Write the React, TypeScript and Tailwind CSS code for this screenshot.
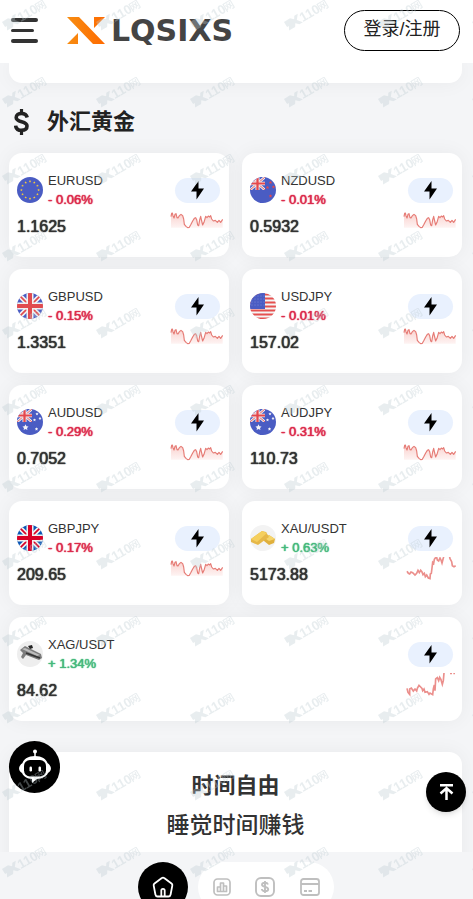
import React from "react";

type FlagKind = "eu" | "nz" | "gb" | "us" | "au" | "gbBright" | "gold" | "silver";
type ChartKind = "wave" | "gold" | "silver";

interface Quote {
  pair: string;
  change: string;
  price: string;
  up?: boolean;
  flag: FlagKind;
  chart: ChartKind;
}

const quotes: Quote[] = [
  { pair: "EURUSD", change: "- 0.06%", price: "1.1625", flag: "eu", chart: "wave" },
  { pair: "NZDUSD", change: "- 0.01%", price: "0.5932", flag: "nz", chart: "wave" },
  { pair: "GBPUSD", change: "- 0.15%", price: "1.3351", flag: "gb", chart: "wave" },
  { pair: "USDJPY", change: "- 0.01%", price: "157.02", flag: "us", chart: "wave" },
  { pair: "AUDUSD", change: "- 0.29%", price: "0.7052", flag: "au", chart: "wave" },
  { pair: "AUDJPY", change: "- 0.31%", price: "110.73", flag: "au", chart: "wave" },
  { pair: "GBPJPY", change: "- 0.17%", price: "209.65", flag: "gbBright", chart: "wave" },
  { pair: "XAU/USDT", change: "+ 0.63%", price: "5173.88", up: true, flag: "gold", chart: "gold" },
  { pair: "XAG/USDT", change: "+ 1.34%", price: "84.62", up: true, flag: "silver", chart: "silver" },
];

const wave =
  "513,215 515,205 517,204 519,212 522,219 525,208 528,206 531,218 534,219 538,212 543,208 548,212 551,222 553,238 558,244 563,248 568,247 573,238 578,228 583,220 587,218 590,224 593,240 596,242 599,225 602,214 605,228 608,240 612,232 617,214 621,218 625,213 629,216 632,212 635,222 640,228 646,226 652,232 657,226 662,232 668,223";

function Sparkline({ kind, id }: { kind: ChartKind; id: string }) {
  if (kind === "wave") {
    return (
      <svg className="h-6 w-[54px]" viewBox="510 192 162 72" aria-hidden="true">
        <defs>
          <linearGradient id={id} x1="0" y1="0" x2="0" y2="1">
            <stop offset="0" stopColor="#f28b82" stopOpacity="0.4" />
            <stop offset="1" stopColor="#f28b82" stopOpacity="0.1" />
          </linearGradient>
        </defs>
        <polygon points={`513,248 ${wave} 668,248`} fill={`url(#${id})`} />
        <polyline points={wave} fill="none" stroke="#e67c76" strokeWidth="3.5" strokeLinejoin="round" />
      </svg>
    );
  }
  if (kind === "gold") {
    return (
      <svg className="h-6 w-[54px]" viewBox="504 189 162 72" aria-hidden="true">
        <polyline
          points="516,232 520,238 524,240 528,234 533,236 540,243 545,238 549,229 553,236 557,229 561,234 564,242 568,238 571,248 575,243 580,252 585,254 586,240 589,238 591,222 593,205 596,208 598,196 601,192 605,190 607,198 611,201 615,192 618,198 621,207 625,192 630,170 640,170 645,194 650,203 652,215 657,218 662,215"
          fill="none"
          stroke="#eb8f8c"
          strokeWidth="5"
        />
      </svg>
    );
  }
  return (
    <svg className="h-6 w-[54px]" viewBox="1209 192 162 72" aria-hidden="true">
      <polyline
        points="1221,238 1224,250 1229,256 1229,240 1234,237 1240,246 1245,240 1250,246 1252,238 1257,229 1262,234 1266,238 1268,245 1272,240 1275,250 1282,248 1287,256 1290,252 1298,257 1300,240 1303,228 1305,245 1307,210 1312,206 1316,215 1319,205 1323,212 1327,226 1330,215 1332,192 1336,170"
        fill="none"
        stroke="#eb8f8c"
        strokeWidth="5"
      />
      <path d="M1350 194h6m4 0h5" stroke="#eb8f8c" strokeWidth="4" />
    </svg>
  );
}

function UnionJack({ blue, red, cross = "#f1f1f1" }: { blue: string; red: string; cross?: string }) {
  return (
    <g>
      <rect width="26" height="26" fill={blue} />
      <path d="M0 0L26 26M26 0L0 26" stroke={cross} strokeWidth="5" />
      <path d="M0 0L26 26M26 0L0 26" stroke={red} strokeWidth="1.6" />
      <path d="M13 0V26M0 13H26" stroke={cross} strokeWidth="7" />
      <path d="M13 0V26M0 13H26" stroke={red} strokeWidth="4" />
    </g>
  );
}

function Star({ x, y, r, fill }: { x: number; y: number; r: number; fill: string }) {
  const points = Array.from({ length: 10 }, (_, i) => {
    const a = (Math.PI / 5) * i - Math.PI / 2;
    const d = i % 2 ? r * 0.5 : r;
    return `${x + d * Math.cos(a)},${y + d * Math.sin(a)}`;
  }).join(" ");
  return <polygon points={points} fill={fill} />;
}

function Flag({ kind, id }: { kind: FlagKind; id: string }) {
  return (
    <svg className="size-[26px] shrink-0" viewBox="0 0 26 26" aria-hidden="true">
      <defs>
        <clipPath id={id}>
          <circle cx="13" cy="13" r="13" />
        </clipPath>
      </defs>
      <g clipPath={`url(#${id})`}>
        {kind === "eu" && (
          <>
            <rect width="26" height="26" fill="#4a5cc3" />
            {Array.from({ length: 12 }, (_, i) => {
              const a = (Math.PI / 6) * i;
              return <Star key={i} x={13 + 8.6 * Math.cos(a)} y={13 + 8.6 * Math.sin(a)} r={1.3} fill="#f3c73c" />;
            })}
          </>
        )}
        {(kind === "nz" || kind === "au") && (
          <>
            <rect width="26" height="26" fill="#4a5cc3" />
            <svg x="0" y="0" width="15" height="13" viewBox="0 0 26 26" preserveAspectRatio="none">
              <UnionJack blue="#4a5cc3" red="#e5484d" />
            </svg>
            {kind === "nz" ? (
              <>
                <Star x={20.5} y={5.5} r={1.7} fill="#e5484d" />
                <Star x={17.5} y={10.5} r={1.7} fill="#e5484d" />
                <Star x={23.5} y={10} r={1.7} fill="#e5484d" />
                <Star x={20.5} y={19} r={1.8} fill="#e5484d" />
              </>
            ) : (
              <>
                <Star x={8.5} y={18.5} r={3.2} fill="#f4f4f8" />
                <Star x={20} y={5} r={1.6} fill="#f4f4f8" />
                <Star x={17.5} y={11} r={1.6} fill="#f4f4f8" />
                <Star x={23} y={9.5} r={1.6} fill="#f4f4f8" />
                <Star x={19.5} y={20} r={1.8} fill="#f4f4f8" />
              </>
            )}
          </>
        )}
        {kind === "gb" && <UnionJack blue="#4a5cc3" red="#e14b4f" />}
        {kind === "gbBright" && <UnionJack blue="#0b57b5" red="#d80027" />}
        {kind === "us" && (
          <>
            <rect width="26" height="26" fill="#f4f4f4" />
            {[1, 5, 9, 13, 17, 21, 25].map((y) => (
              <rect key={y} y={y - 0.5} width="26" height="2" fill="#e5504f" />
            ))}
            <rect width="15" height="16" fill="#4a5cc3" />
            {[3, 6, 9, 12].map((y) =>
              [2, 5, 8, 11, 14].map((x) => <circle key={`${x}-${y}`} cx={x} cy={y} r="0.4" fill="#b9c1ee" />)
            )}
          </>
        )}
        {kind === "gold" && (
          <>
            <rect width="26" height="26" fill="#f3f3f3" />
            <path d="M13 12l6-2 6 4-1 4-5 2-5-4z" fill="#e0b03c" />
            <path d="M13 12l6-2 6 4-6 2z" fill="#f6d56b" />
            <path d="M1 14l11-8 4 1 3 5-11 8-7-3z" fill="#e6b848" />
            <path d="M1 14l11-8 5 2-10 9z" fill="#f5cf5d" />
          </>
        )}
        {kind === "silver" && (
          <>
            <rect width="26" height="26" fill="#eeeeee" />
            <path d="M3 9l5-4 16 8 1 4-3 2-13-5-3 4-2-2 2-4z" fill="#7c7c7c" />
            <path d="M5 8l3-1 15 7-3 1z" fill="#bdbdbd" />
            <path d="M11 5l4-1 1 3-3 1z" fill="#222222" />
            <path d="M9 12l14 5" stroke="#333333" strokeWidth="1.5" />
          </>
        )}
      </g>
    </svg>
  );
}

function QuoteCard({ quote, id }: { quote: Quote; id: string }) {
  return (
    <article className="flex h-26 justify-between rounded-[13px] bg-white pr-[5px] pl-2 shadow-[0_0_20px_rgba(0,0,0,0.05)] last:col-span-2">
      <div className="pt-[18px]">
        <div className="flex items-center gap-[5px]">
          <Flag kind={quote.flag} id={`${id}-flag`} />
          <div className="text-[13px] leading-[19px]">
            <h3 className="text-[#333]">{quote.pair}</h3>
            <p
              className={
                quote.up
                  ? "text-[#45b97c] [text-shadow:0_0_1px_currentColor,0_0_1px_currentColor]"
                  : "text-[#dc2a4c] [text-shadow:0_0_1px_currentColor,0_0_1px_currentColor]"
              }
            >
              {quote.change}
            </p>
          </div>
        </div>
        <p className="mt-[7px] text-base leading-[22px] text-[#333] [text-shadow:0_0_1px_currentColor,0_0_1px_currentColor]">
          {quote.price}
        </p>
      </div>
      <div className="flex flex-col items-end gap-[6px] pt-[25px]">
        <button
          type="button"
          aria-label={`${quote.pair} 交易`}
          className="mr-1 flex h-[25px] w-[45px] items-center justify-center rounded-full bg-[#e9f1fe]"
        >
          <svg className="h-5 w-4" viewBox="0 0 16 20" aria-hidden="true">
            <path d="M8.500 0L1 10.500H6.500V18.500L14 7.500H8.500Z" fill="#000" />
          </svg>
        </button>
        <Sparkline kind={quote.chart} id={`${id}-fill`} />
      </div>
    </article>
  );
}

function Watermark() {
  return (
    <svg className="pointer-events-none absolute inset-0 z-30 size-full" aria-hidden="true">
      <defs>
        <pattern id="watermark" width="94" height="77" patternUnits="userSpaceOnUse">
          <g transform="translate(8 30) rotate(-31)" fill="#bccbd1" fillOpacity="0.35">
            <path d="M-1 -10H6L9 -7L11 -10H15L11 -5L15 0H11L8 -3L6 0H-1L1 -4H-1Z" />
            <text x="15" y="0" fontSize="13" fontWeight="700" fontFamily="Liberation Sans, Noto Sans CJK SC, sans-serif">
              110
            </text>
            <text x="35" y="0" fontSize="11" fontWeight="500" fontFamily="Noto Sans CJK SC, sans-serif">
              网
            </text>
          </g>
        </pattern>
      </defs>
      <rect width="100%" height="100%" fill="url(#watermark)" />
    </svg>
  );
}

export default function App() {
  return (
    <div className="relative flex h-screen flex-col overflow-hidden bg-[#f4f5f7] font-['Liberation_Sans','Noto_Sans_CJK_SC',sans-serif] text-[#333]">
      <header className="flex h-[63px] shrink-0 items-start bg-white pr-[13px] pl-[11px]">
        <button type="button" aria-label="菜单" className="mt-[18px] flex flex-col gap-[7px]">
          <span className="h-1 w-[27px] rounded-full bg-[#333]" />
          <span className="h-[3px] w-[23px] rounded-full bg-[#333]" />
          <span className="h-1 w-[27px] rounded-full bg-[#333]" />
        </button>
        <a href="#home" className="mt-[13px] ml-[29px] flex items-center gap-[6px]">
          <svg className="h-[27px] w-[38px]" viewBox="0 0 38 27" aria-hidden="true">
            <defs>
              <linearGradient id="brand" x1="0" x2="1">
                <stop offset="0" stopColor="#f78d12" />
                <stop offset="1" stopColor="#ff6a00" />
              </linearGradient>
            </defs>
            <path d="M0 0H12L38 27H26ZM27 0H38L27 11ZM0 27H11V16Z" fill="url(#brand)" />
          </svg>
          <span className="font-['DejaVu_Sans',sans-serif] text-[30px] leading-[35px] font-bold text-[#444]">LQSIXS</span>
        </a>
        <button
          type="button"
          className="mt-[10px] ml-auto h-[41px] w-[116px] rounded-full border border-black pb-1 text-lg leading-6 text-[#222]"
        >
          登录/注册
        </button>
      </header>

      <main className="min-h-0 flex-1 overflow-hidden pr-[11px] pl-[9px]">
        <div className="h-5 rounded-b-[13px] bg-white shadow-[0_0_20px_rgba(0,0,0,0.05)]" />
        <div className="flex h-[70px] items-center gap-[18px] pt-[7px] pl-[5px]">
          <svg className="h-[26px] w-[15px]" viewBox="0 0 15 26" fill="none" stroke="#222" aria-hidden="true">
            <path d="M7.500 0V5M7.500 21V26" strokeWidth="3.200" />
            <path d="M13.200 8.500C12.500 5.500 10.500 4.500 7.500 4.500C4.500 4.500 2.200 6 2.200 8.500C2.200 14 13 11.500 13 17C13 19.800 10.800 21.300 7.500 21.300C4 21.300 2 19.800 1.600 16.600" strokeWidth="3.600" />
          </svg>
          <h2 className="text-[22px] leading-8 font-bold text-[#222]">外汇黄金</h2>
        </div>

        <section className="grid grid-cols-2 gap-x-[13px] gap-y-3">
          {quotes.map((quote, i) => (
            <QuoteCard key={quote.pair} quote={quote} id={`quote-${i}`} />
          ))}
        </section>

        <section className="mt-[31px] h-[140px] rounded-[13px] bg-white pt-[15px] text-center shadow-[0_0_20px_rgba(0,0,0,0.05)]">
          <h2 className="text-[22px] leading-[38px] font-bold">时间自由</h2>
          <p className="text-[23px] leading-10 font-medium">睡觉时间赚钱</p>
        </section>
      </main>

      <nav className="z-10 flex h-[47px] shrink-0 justify-center gap-[10px] overflow-hidden bg-[#f4f5f7] pt-[10px] pr-[2px]">
        <a href="#home" aria-label="首页" className="flex size-[50px] items-center justify-center rounded-full bg-black">
          <svg className="size-[22px]" viewBox="0 0 22 22" fill="none" stroke="#fff" strokeWidth="1.800" strokeLinejoin="round" aria-hidden="true">
            <path d="M9.500 2.200Q11 1.200 12.500 2.200L19.500 7.500Q20.600 8.300 20.300 9.600L18.600 18.500Q18.200 20.500 16.500 20.500H5.500Q3.800 20.500 3.400 18.500L1.700 9.600Q1.400 8.300 2.500 7.500Z" />
            <path d="M9.300 20V14.500Q9.300 12.800 11 12.800Q12.700 12.800 12.700 14.500V20" />
          </svg>
        </a>
        <div className="flex h-[50px] w-[136px] items-center justify-between rounded-full bg-white pr-[14px] pl-[15px] text-[#bfbfbf]">
          <a href="#market" aria-label="行情">
            <svg className="size-[18px]" viewBox="0 0 18 18" fill="none" stroke="currentColor" strokeWidth="1.700" strokeLinejoin="round" aria-hidden="true">
              <rect x="1" y="1" width="16" height="16" rx="3.500" />
              <path d="M4.500 13.500V9H7.500V5H10.500V13.500ZM7.500 9V13.500M10.500 8H13.500V13.500H4.500" />
            </svg>
          </a>
          <a href="#trade" aria-label="交易">
            <svg className="size-5" viewBox="0 0 20 20" fill="none" stroke="currentColor" strokeWidth="1.900" aria-hidden="true">
              <rect x="1" y="1" width="18" height="18" rx="5" />
              <path d="M13 7.500C12.500 6 11.500 5.700 10 5.700C8.200 5.700 7 6.500 7 7.800C7 10.600 13.200 9.200 13.200 12.200C13.200 13.600 12 14.300 10 14.300C8.200 14.300 7 13.600 6.800 12M10 4V16" />
            </svg>
          </a>
          <a href="#assets" aria-label="资产">
            <svg className="h-[18px] w-5" viewBox="0 0 20 18" fill="none" stroke="currentColor" strokeWidth="1.800" aria-hidden="true">
              <rect x="1" y="1" width="18" height="16" rx="2.500" />
              <path d="M1 6H19M4 13H7M8.500 13H12" />
            </svg>
          </a>
        </div>
      </nav>

      <button
        type="button"
        aria-label="客服"
        className="absolute bottom-[106px] left-[9px] z-20 flex h-[52px] w-[51px] items-center justify-center rounded-full bg-black"
      >
        <svg className="h-[36px] w-[34px]" viewBox="0 0 34 36" aria-hidden="true">
          <path d="M17 2V9" stroke="#fff" strokeWidth="1.500" />
          <circle cx="17" cy="2.500" r="2" fill="#fff" />
          <path d="M17 7C24 7 28 10 29.500 14C34 17 34 22 30 24C28 28 24 29.500 19 30L14 34V30C9 29.500 6 28 4 24C0 22 0 17 4.500 14C6 10 10 7 17 7Z" fill="#fff" />
          <rect x="6" y="11" width="22" height="16.500" rx="6" fill="#000" />
          <rect x="11.500" y="17.500" width="2.500" height="5" rx="1.200" fill="#fff" />
          <rect x="20.500" y="17.500" width="2.500" height="5" rx="1.200" fill="#fff" />
        </svg>
      </button>
      <button
        type="button"
        aria-label="回到顶部"
        className="absolute right-[7px] bottom-[87px] z-20 flex size-10 items-center justify-center rounded-full bg-black shadow-md"
      >
        <svg className="h-[17px] w-[15px]" viewBox="0 0 15 17" fill="none" stroke="#fff" strokeWidth="2.500" aria-hidden="true">
          <path d="M1 1.300H14M7.500 16V5M1.500 9.500L7.500 4.200L13.500 9.500" />
        </svg>
      </button>

      <Watermark />
    </div>
  );
}
